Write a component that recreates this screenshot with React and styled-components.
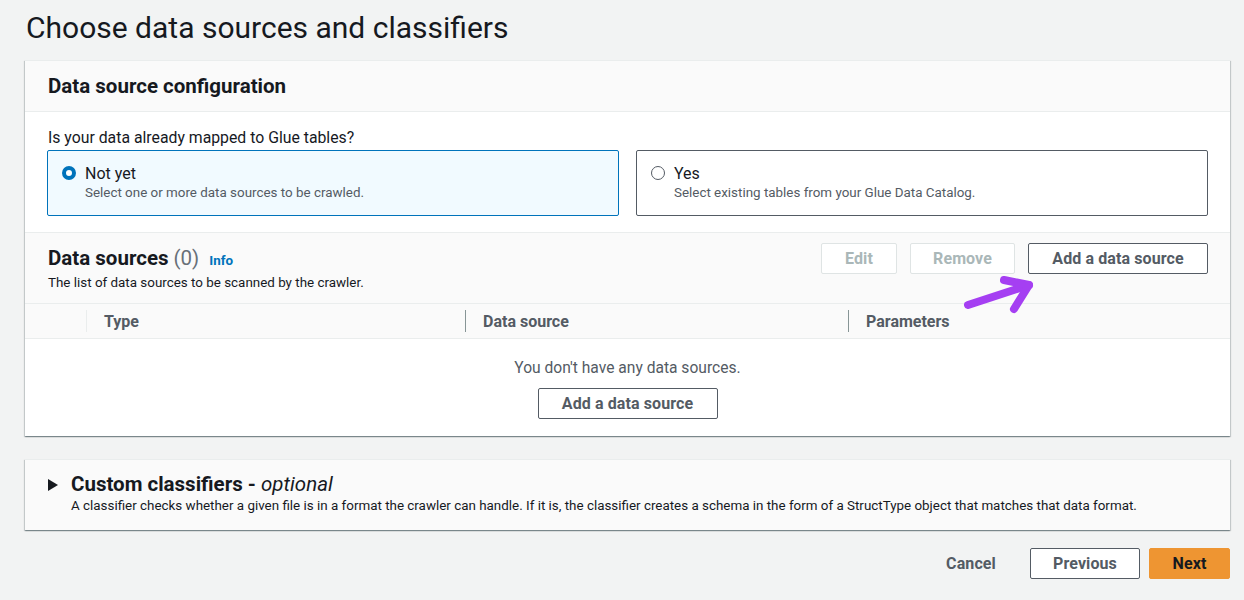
import React from 'react';
import styled, {createGlobalStyle} from 'styled-components';

const GlobalStyle = createGlobalStyle`
  body {
    margin: 0;
    background: #f2f3f3;
    font-family: Roboto, "Liberation Sans", sans-serif;
    color: #16191f;
  }
`;

const Page = styled.div`
  padding: 0 14px 0 25px;
  width: 1244px;
  box-sizing: border-box;
`;

const Title = styled.h1`
  margin: 0;
  padding: 9px 0 0 1px;
  height: 60px;
  box-sizing: border-box;
  font-size: 30px;
  font-weight: 400;
  line-height: 38px;
  color: #16191f;
`;

const Panel = styled.section`
  background: #fff;
  border-top: 1px solid #eaeded;
  box-shadow: 0 1px 1px 0 rgba(0, 28, 36, 0.3), 1px 1px 1px 0 rgba(0, 28, 36, 0.15),
    -1px 1px 1px 0 rgba(0, 28, 36, 0.15);
  margin-bottom: ${p => p.$gap || 0}px;
  position: relative;
`;

const PanelHeader = styled.div`
  background: #fafafa;
  height: 50px;
  display: flex;
  align-items: center;
  padding: 0 23px;
  border-bottom: 1px solid #eaeded;
`;

const H2 = styled.h2`
  margin: 0;
  font-size: 20.5px;
  font-weight: 700;
  line-height: 24px;
`;

const Body = styled.div`
  padding: 16px 22px 16px 22px;
  border-bottom: 1px solid #eaeded;
`;

const Label = styled.div`
  font-size: 15.8px;
  line-height: 20px;
  margin: 0 0 2px 1px;
`;

const Tiles = styled.div`
  display: grid;
  grid-template-columns: 1fr 1fr;
  gap: 17px;
`;

const Tile = styled.div`
  height: 66px;
  box-sizing: border-box;
  border: 1px solid ${p => (p.$checked ? '#0073bb' : '#545b64')};
  background: ${p => (p.$checked ? '#f1faff' : '#fff')};
  border-radius: 2px;
  display: flex;
  padding: 13px 14px;
  gap: 9px;
`;

const Radio = styled.span`
  width: 14px;
  height: 14px;
  margin-top: 2px;
  box-sizing: border-box;
  border-radius: 50%;
  flex: none;
  border: ${p => (p.$checked ? '4px solid #0073bb' : '1px solid #545b64')};
  background: #fff;
`;

const TileText = styled.div`
  display: flex;
  flex-direction: column;
`;

const TileTitle = styled.span`
  font-size: 16px;
  line-height: 19px;
`;

const TileDesc = styled.span`
  font-size: 13.4px;
  line-height: 19px;
  color: #545b64;
`;

const TableSection = styled.div`
  background: #fafafa;
  position: relative;
`;

const ToolRow = styled.div`
  display: flex;
  justify-content: space-between;
  padding: 10px 22px 14px 23px;
  height: 71px;
  box-sizing: border-box;
  border-bottom: 1px solid #eaeded;
`;

const HeadingBlock = styled.div`
  display: flex;
  flex-direction: column;
  padding-top: 3px;
`;

const Count = styled.span`
  font-weight: 400;
  color: #687078;
`;

const Info = styled.a`
  font-size: 13.4px;
  font-weight: 700;
  color: #0073bb;
  margin-left: 10px;
`;

const Small = styled.span`
  font-size: 13.4px;
  line-height: 20px;
  color: #16191f;
`;

const Actions = styled.div`
  display: flex;
  gap: 13px;
  align-items: flex-start;
`;

const Button = styled.button`
  height: 31px;
  width: ${p => p.$w}px;
  box-sizing: border-box;
  border-radius: 2px;
  font-family: inherit;
  font-size: 16px;
  font-weight: 700;
  letter-spacing: 0.1px;
  padding: 0;
  cursor: pointer;
  background: ${p => (p.$primary ? '#ee9532' : p.$link ? 'transparent' : '#fff')};
  border: 1px solid
    ${p => (p.$primary ? '#ee9532' : p.$link ? 'transparent' : p.disabled ? '#dfe4e4' : '#545b64')};
  color: ${p => (p.$primary ? '#16191f' : p.disabled ? '#aab7b8' : '#545b64')};
`;

const HeadRow = styled.div`
  display: grid;
  grid-template-columns: 61px 379px 383px 1fr;
  height: 34px;
  align-items: center;
  border-bottom: 1px solid #eaeded;
`;

const HeadCell = styled.div`
  height: 22px;
  display: flex;
  align-items: center;
  padding-left: 17px;
  border-left: 1px solid ${p => (p.$light ? '#eaeded' : '#879596')};
  font-size: 16px;
  font-weight: 700;
  color: #545b64;
  &:first-child {
    border-left: none;
  }
`;

const Empty = styled.div`
  background: #fff;
  height: 97px;
  display: flex;
  flex-direction: column;
  align-items: center;
  padding-top: 20px;
  box-sizing: border-box;
  gap: 10px;
`;

const EmptyText = styled.span`
  font-size: 15.6px;
  line-height: 19px;
  color: #545b64;
`;

// hand-drawn annotation arrow pointing at the add button
const Arrow = styled.svg`
  position: absolute;
  left: 913px;
  top: 38px;
`;

const Expander = styled.div`
  background: #fafafa;
  height: 70px;
  box-sizing: border-box;
  padding: 12px 22px 0 23px;
  display: flex;
  gap: 13px;
`;

const Caret = styled.svg`
  margin-top: 7px;
  flex: none;
`;

const ExpTitle = styled.div`
  display: flex;
  flex-direction: column;
`;

const Optional = styled.i`
  font-weight: 400;
`;

const Footer = styled.div`
  display: flex;
  justify-content: flex-end;
  gap: 9px;
  margin-top: 18px;
`;

function App() {
  return (
    <Page>
      <GlobalStyle />
      <Title>Choose data sources and classifiers</Title>

      <Panel $gap={23}>
        <PanelHeader>
          <H2>Data source configuration</H2>
        </PanelHeader>
        <Body>
          <Label>Is your data already mapped to Glue tables?</Label>
          <Tiles>
            <Tile $checked>
              <Radio $checked />
              <TileText>
                <TileTitle>Not yet</TileTitle>
                <TileDesc>Select one or more data sources to be crawled.</TileDesc>
              </TileText>
            </Tile>
            <Tile>
              <Radio />
              <TileText>
                <TileTitle>Yes</TileTitle>
                <TileDesc>Select existing tables from your Glue Data Catalog.</TileDesc>
              </TileText>
            </Tile>
          </Tiles>
        </Body>

        <TableSection>
          <ToolRow>
            <HeadingBlock>
              <H2>
                Data sources <Count>(0)</Count>
                <Info>Info</Info>
              </H2>
              <Small>The list of data sources to be scanned by the crawler.</Small>
            </HeadingBlock>
            <Actions>
              <Button $w={76} disabled>Edit</Button>
              <Button $w={105} disabled>Remove</Button>
              <Button $w={180}>Add a data source</Button>
            </Actions>
          </ToolRow>
          <HeadRow>
            <HeadCell />
            <HeadCell $light>Type</HeadCell>
            <HeadCell>Data source</HeadCell>
            <HeadCell>Parameters</HeadCell>
          </HeadRow>
          <Arrow width="100" height="45" viewBox="0 0 100 45">
            <g fill="none" stroke="#a53ff2" strokeWidth="8" strokeLinecap="round" strokeLinejoin="round">
              <path d="M30 34 L91 14" />
              <path d="M66 9 L91 14 L76 38" />
            </g>
          </Arrow>
        </TableSection>
        <Empty>
          <EmptyText>You don't have any data sources.</EmptyText>
          <Button $w={180}>Add a data source</Button>
        </Empty>
      </Panel>

      <Panel>
        <Expander>
          <Caret width="10" height="12" viewBox="0 0 10 12">
            <path d="M0 0 L10 6 L0 12 Z" fill="#16191f" />
          </Caret>
          <ExpTitle>
            <H2>
              Custom classifiers - <Optional>optional</Optional>
            </H2>
            <Small>
              A classifier checks whether a given file is in a format the crawler can handle. If it
              is, the classifier creates a schema in the form of a StructType object that matches
              that data format.
            </Small>
          </ExpTitle>
        </Expander>
      </Panel>

      <Footer>
        <Button $w={100} $link>Cancel</Button>
        <Button $w={110}>Previous</Button>
        <Button $w={81} $primary>Next</Button>
      </Footer>
    </Page>
  );
}

export default App;
